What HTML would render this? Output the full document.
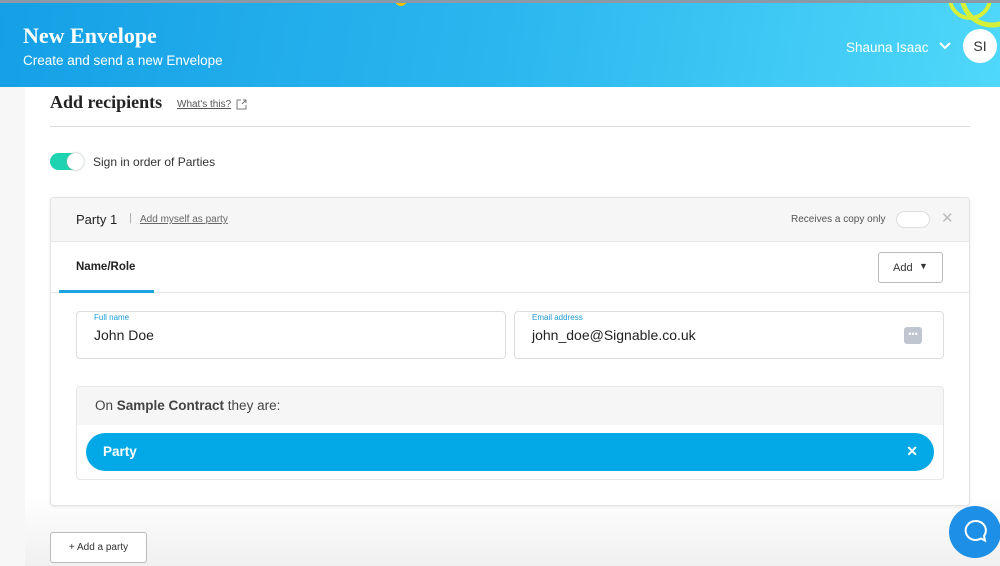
<!DOCTYPE html>
<html><head><style>
*{box-sizing:border-box;margin:0;padding:0}
body{width:1000px;height:566px;overflow:hidden;font-family:"Liberation Sans",sans-serif;background:#f7f7f7;position:relative;color:#333}
.hdr{position:absolute;left:0;top:0;width:1000px;height:87px;background:linear-gradient(100deg,#15a0e6 0%,#2bb6ef 50%,#4fd8f9 100%);overflow:hidden;border-top:3px solid #8a9aa6}
.hdr h1{position:absolute;left:23px;top:20px;font-family:"Liberation Serif",serif;font-size:22px;color:#fff;font-weight:bold}
.hdr .sub{position:absolute;left:23px;top:50px;font-size:13.5px;color:#fff}
.main{position:absolute;left:25px;top:87px;width:975px;height:479px;background:linear-gradient(#fff 85%,#f0f0f0)}
</style></head><body>
<div class="hdr">
<h1>New Envelope</h1><div class="sub">Create and send a new Envelope</div>
<svg style="position:absolute;left:900px;top:-3px" width="100" height="90"><circle cx="92" cy="-5" r="30" fill="none" stroke="#d6f03a" stroke-width="5"/><circle cx="70" cy="-2" r="20" fill="none" stroke="#d6f03a" stroke-width="4"/></svg>
<svg style="position:absolute;left:392px;top:-3px" width="18" height="6"><circle cx="9" cy="0" r="6" fill="#f2c200"/></svg>
<div style="position:absolute;left:846px;top:37px;font-size:13.5px;color:#fff">Shauna Isaac</div>
<svg style="position:absolute;left:938px;top:38px" width="14" height="10"><path d="M2 2l5 5 5-5" fill="none" stroke="#fff" stroke-width="2"/></svg>
<div style="position:absolute;left:963px;top:26px;width:34px;height:34px;border-radius:50%;background:#fff;color:#333;font-size:14px;text-align:center;line-height:34px">SI</div>
</div>
<div class="main">
<div style="position:absolute;left:25px;top:5px;font-family:'Liberation Serif',serif;font-size:18px;font-weight:bold;color:#222">Add recipients</div>
<div style="position:absolute;left:152px;top:12px;font-size:10px;color:#555;text-decoration:underline">What's this?</div>
<svg style="position:absolute;left:211px;top:12px" width="11" height="11"><path d="M1 1h4M1 1v9h9v-4M6 5l4-4M7 1h3v3" fill="none" stroke="#777" stroke-width="1"/></svg>
<div style="position:absolute;left:25px;top:39px;width:920px;height:1px;background:#ddd"></div>
<div style="position:absolute;left:25px;top:66px;width:34px;height:17px;border-radius:9px;background:#1dd3b0"></div>
<div style="position:absolute;left:42px;top:66px;width:17px;height:17px;border-radius:50%;background:#fff;box-shadow:0 0 2px #aaa"></div>
<div style="position:absolute;left:68px;top:68px;font-size:12px;color:#333">Sign in order of Parties</div>
<div style="position:absolute;left:25px;top:110px;width:920px;height:309px;border:1px solid #e2e2e2;border-radius:4px;background:#fff;box-shadow:0 1px 3px rgba(0,0,0,.08);overflow:hidden">
 <div style="height:44px;background:#f6f6f6;border-bottom:1px solid #e6e6e6;position:relative">
  <span style="position:absolute;left:25px;top:14px;font-size:13px;color:#222">Party 1</span>
  <span style="position:absolute;left:78px;top:14px;font-size:11px;color:#aaa">|</span>
  <span style="position:absolute;left:89px;top:16px;font-size:10px;color:#666;text-decoration:underline">Add myself as party</span>
  <span style="position:absolute;left:740px;top:16px;font-size:10px;color:#555">Receives a copy only</span>
  <div style="position:absolute;left:845px;top:13px;width:34px;height:17px;border-radius:9px;border:1px solid #ddd;background:#fff"></div>
  <span style="position:absolute;left:890px;top:11px;font-size:15px;color:#bbb">✕</span>
 </div>
 <div style="height:51px;border-bottom:1px solid #e6e6e6;position:relative">
  <span style="position:absolute;left:25px;top:19px;font-size:11.5px;font-weight:bold;color:#222">Name/Role</span>
  <div style="position:absolute;left:8px;top:48px;width:95px;height:3px;background:#1ca5e0"></div>
  <div style="position:absolute;left:827px;top:10px;width:65px;height:31px;border:1px solid #bbb;border-radius:3px;font-size:11px;padding:9px 0 0 14px">Add<span style="position:absolute;left:40px;top:8px;font-size:9px">▼</span></div>
 </div>
 <div style="position:absolute;left:25px;top:113px;width:430px;height:48px;border:1px solid #ddd;border-radius:4px">
  <div style="position:absolute;left:17px;top:1px;font-size:8px;color:#1a9ad6">Full name</div>
  <div style="position:absolute;left:17px;top:15px;font-size:14px;color:#222">John Doe</div>
 </div>
 <div style="position:absolute;left:463px;top:113px;width:430px;height:48px;border:1px solid #ddd;border-radius:4px">
  <div style="position:absolute;left:17px;top:1px;font-size:8px;color:#1a9ad6">Email address</div>
  <div style="position:absolute;left:17px;top:15px;font-size:14px;color:#222">john_doe@Signable.co.uk</div>
  <div style="position:absolute;left:389px;top:15px;width:18px;height:17px;border-radius:3px;background:#bfc6cf;color:#fff;font-size:9px;text-align:center;line-height:14px">•••</div>
 </div>
 <div style="position:absolute;left:25px;top:188px;width:868px;height:94px;border:1px solid #e6e6e6;border-radius:4px;overflow:hidden">
  <div style="height:38px;background:#f6f6f6;font-size:13.5px;color:#444;padding:11px 0 0 18px">On <b>Sample Contract</b> they are:</div>
  <div style="position:absolute;left:9px;top:46px;width:848px;height:38px;border-radius:19px;background:#02a9e6;color:#fff;font-size:13.5px;font-weight:bold;padding:11px 0 0 17px">Party<span style="position:absolute;right:16px;top:10px;font-size:14px">✕</span></div>
 </div>
</div>
<div style="position:absolute;left:25px;top:445px;width:97px;height:31px;border:1px solid #bbb;border-radius:3px;background:#fff;font-size:10px;color:#333;text-align:center;line-height:29px">+ Add a party</div>
</div>
<div style="position:absolute;left:949px;top:506px;width:52px;height:52px;border-radius:50%;background:#1e8fe6"></div>
<svg style="position:absolute;left:962px;top:518px" width="26" height="26"><path d="M13 3a10 9.5 0 1 0 6 17.5l4 2-1-4.5A10 9.5 0 0 0 13 3z" fill="none" stroke="#fff" stroke-width="2"/></svg>
</body></html>
